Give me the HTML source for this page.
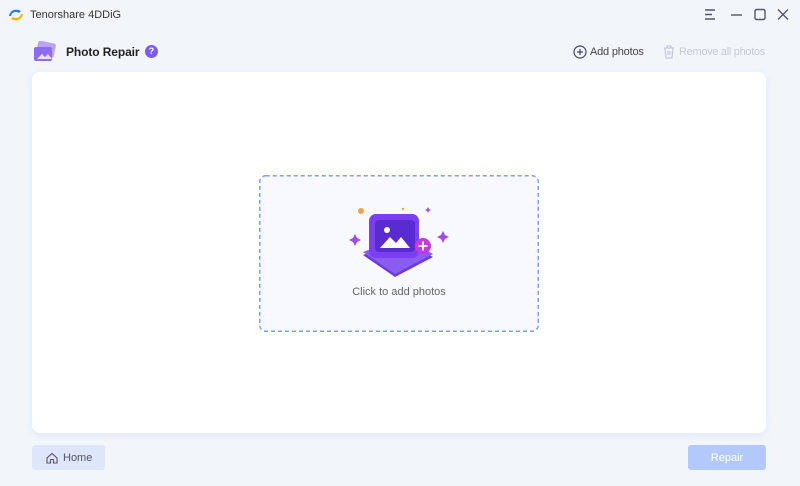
<!DOCTYPE html>
<html><head><meta charset="utf-8"><style>
*{margin:0;padding:0;box-sizing:border-box}
body{width:800px;height:486px;background:#f2f6fb;font-family:"Liberation Sans",sans-serif;position:relative;overflow:hidden}
.abs{position:absolute}
</style></head><body>
<svg class="abs" style="left:7px;top:7px" width="18" height="16" viewBox="0 0 18 16"><path d="M2 9 C3 3 9 1 14 4 L12 6 C9 4 5 5 4 9Z" fill="#2a7de1"/><path d="M16 7 C15 13 9 15 4 12 L6 10 C9 12 13 11 14 7Z" fill="#f4b400"/></svg>
<div class="abs" style="left:30px;top:9px;font-size:11px;color:#333">Tenorshare 4DDiG</div>
<svg class="abs" style="left:703px;top:8px" width="90" height="14" viewBox="0 0 90 14" stroke="#556" stroke-width="1.4" fill="none"><path d="M2 2h10M2 6.5h7M2 11h10"/><path d="M28 7h11"/><rect x="52" y="1.5" width="10" height="10" rx="1.5"/><path d="M75 1.5l10 10M85 1.5l-10 10"/></svg>
<svg class="abs" style="left:33px;top:41px" width="24" height="22" viewBox="0 0 24 22"><rect x="4" y="1" width="18" height="14" rx="2" fill="#b9a3f5" transform="rotate(12 13 8)"/><rect x="1" y="6" width="18" height="14" rx="2" fill="#8d6cf0"/><path d="M4 18l5-5 3 3 3-3 4 5z" fill="#fff" opacity=".8"/></svg>
<div class="abs" style="left:66px;top:45px;font-size:12px;font-weight:bold;color:#222;letter-spacing:-0.1px">Photo Repair</div>
<div class="abs" style="left:145px;top:45px;width:13px;height:13px;border-radius:50%;background:#7a5cf0;color:#fff;font-size:9px;text-align:center;line-height:13px;font-weight:bold">?</div>
<svg class="abs" style="left:573px;top:45px" width="14" height="14" viewBox="0 0 14 14" fill="none" stroke="#445" stroke-width="1.2"><circle cx="7" cy="7" r="6"/><path d="M7 4v6M4 7h6"/></svg>
<div class="abs" style="left:590px;top:46px;font-size:11px;color:#444;letter-spacing:-0.2px">Add photos</div>
<svg class="abs" style="left:663px;top:45px" width="12" height="14" viewBox="0 0 12 14" fill="none" stroke="#c5c9d2" stroke-width="1.2"><path d="M1 3h10M4 3V1h4v2M2 3l1 10h6l1-10M5 6v4M7 6v4"/></svg>
<div class="abs" style="left:679px;top:46px;font-size:11px;color:#c5c9d2;letter-spacing:-0.3px">Remove all photos</div>
<div class="abs" style="left:32px;top:72px;width:734px;height:361px;background:#fff;border-radius:8px;box-shadow:0 2px 8px rgba(180,200,230,.3)"></div>
<svg class="abs" style="left:259px;top:175px" width="280" height="157"><rect x="0.75" y="0.75" width="278.5" height="155.5" rx="6" fill="#f7f9fe" stroke="#7fa0e6" stroke-width="1.5" stroke-dasharray="4 3"/></svg>
<svg class="abs" style="left:345px;top:200px" width="110" height="80" viewBox="0 0 110 80">
<circle cx="16" cy="11" r="3" fill="#f5a340"/><circle cx="58" cy="9" r="1.2" fill="#f5a340"/>
<path d="M10 34l2 4 4 2-4 2-2 4-2-4-4-2 4-2z" fill="#a24bea"/><path d="M98 31l2 4 4 2-4 2-2 4-2-4-4-2 4-2z" fill="#a24bea"/><path d="M83 7l1 2 2 1-2 1-1 2-1-2-2-1 2-1z" fill="#a24bea"/>
<path d="M18 55l32 22 38-20-30-17z" fill="#6a3be0"/><path d="M18 52l32 22 38-20-30-17z" fill="#8b5cf0"/>
<rect x="24" y="14" width="50" height="44" rx="7" fill="#7b3ff0"/><rect x="30" y="20" width="40" height="32" rx="4" fill="#5a2bd0"/>
<circle cx="42" cy="30" r="3" fill="#fff"/><path d="M35 48l10-11 6 6 5-6 9 11z" fill="#fff"/>
<circle cx="78" cy="46" r="8" fill="#c33ae0"/><path d="M78 41.5v9M73.5 46h9" stroke="#fff" stroke-width="1.8"/>
</svg>
<div class="abs" style="left:259px;top:286px;width:280px;text-align:center;font-size:11px;color:#666">Click to add photos</div>
<div class="abs" style="left:32px;top:445px;width:73px;height:25px;background:#dde6fb;border-radius:3px;font-size:11px;color:#556;line-height:26px;padding-left:31px">Home</div>
<svg class="abs" style="left:46px;top:452px" width="12" height="12" viewBox="0 0 12 12" fill="none" stroke="#556" stroke-width="1.1"><path d="M1 6L6 1.5 11 6V11H7.5V7.5h-3V11H1z"/></svg>
<div class="abs" style="left:688px;top:445px;width:78px;height:25px;background:#b3c9fa;border-radius:3px;font-size:11px;color:#fff;line-height:26px;text-align:center">Repair</div>
</body></html>
